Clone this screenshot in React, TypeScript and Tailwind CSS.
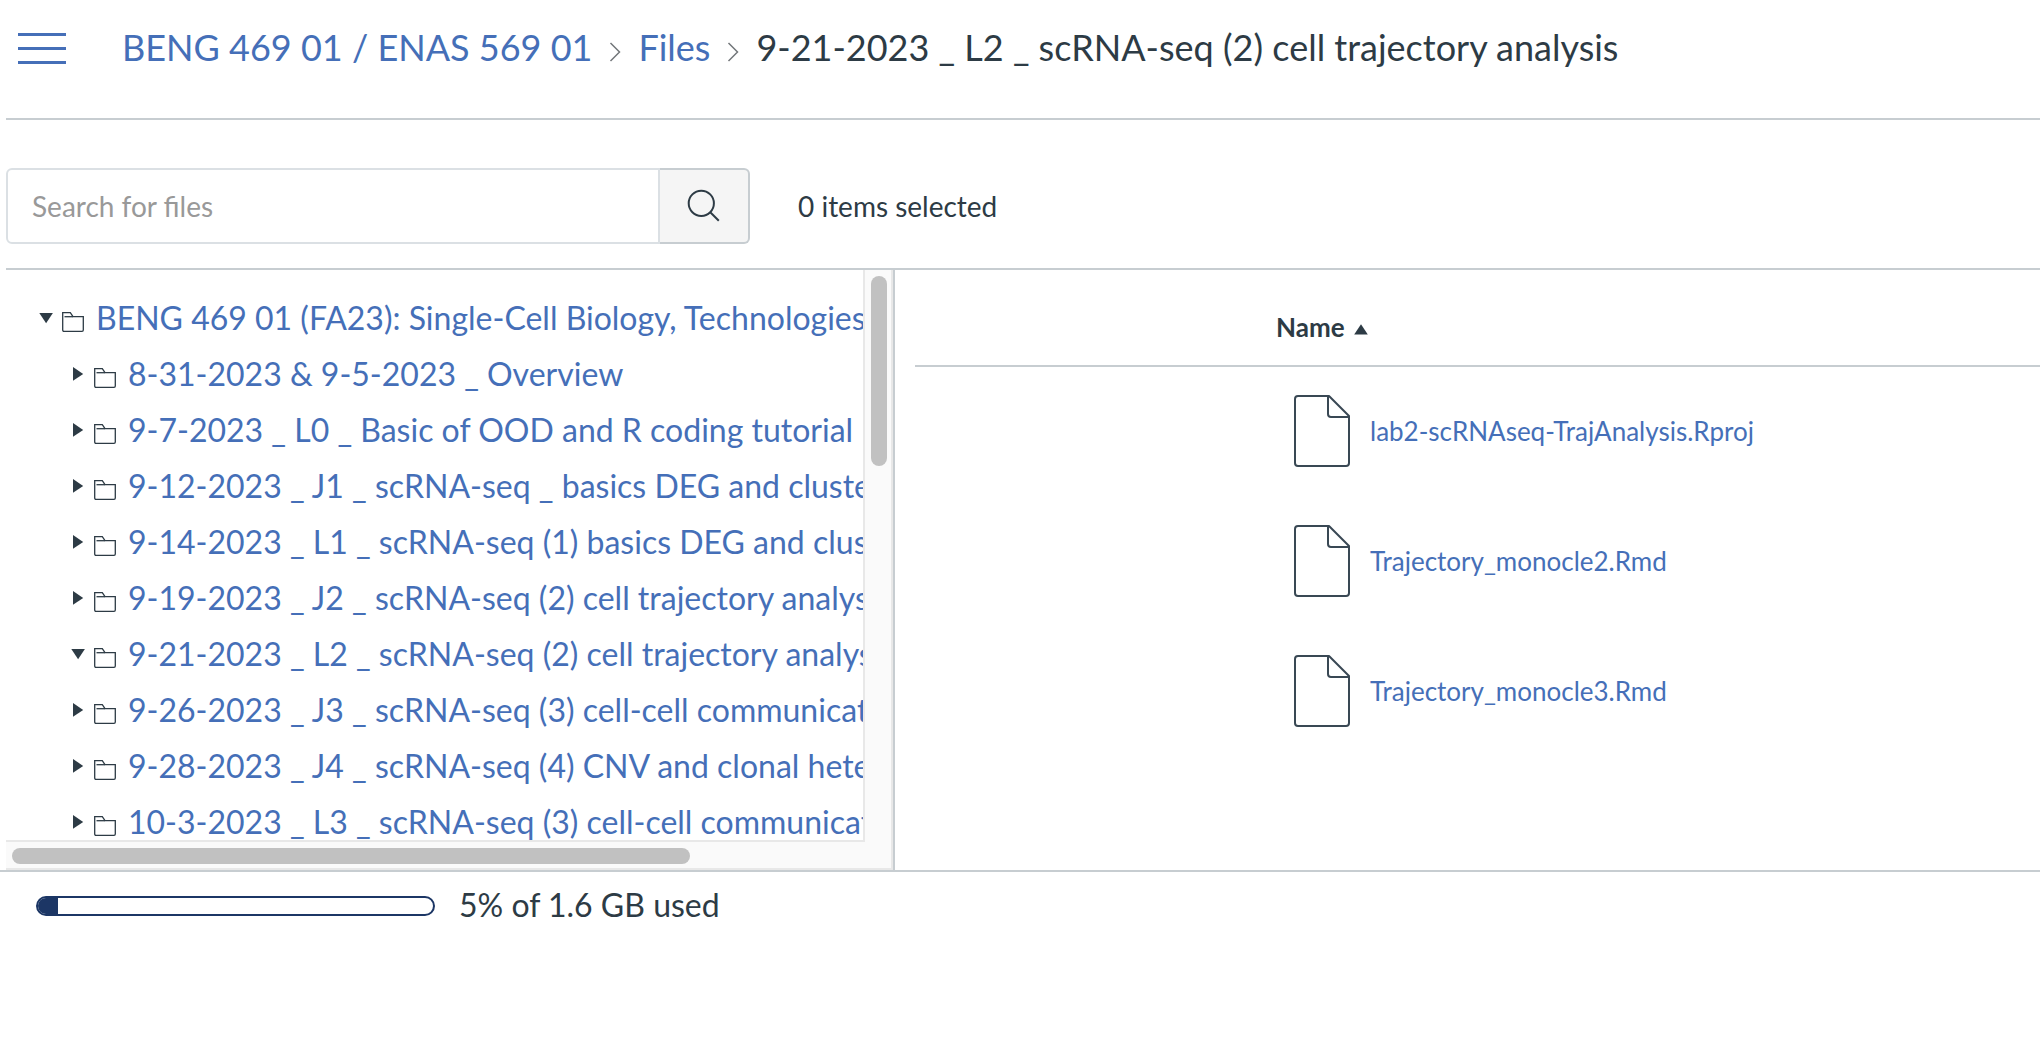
import React from "react";

type Folder = { name: string; open?: boolean };

const folders: Folder[] = [
  { name: "8-31-2023 & 9-5-2023 _ Overview" },
  { name: "9-7-2023 _ L0 _ Basic of OOD and R coding tutorial" },
  { name: "9-12-2023 _ J1 _ scRNA-seq _ basics DEG and clustering" },
  { name: "9-14-2023 _ L1 _ scRNA-seq (1) basics DEG and clustering" },
  { name: "9-19-2023 _ J2 _ scRNA-seq (2) cell trajectory analysis" },
  { name: "9-21-2023 _ L2 _ scRNA-seq (2) cell trajectory analysis", open: true },
  { name: "9-26-2023 _ J3 _ scRNA-seq (3) cell-cell communication" },
  { name: "9-28-2023 _ J4 _ scRNA-seq (4) CNV and clonal heterogeneity" },
  { name: "10-3-2023 _ L3 _ scRNA-seq (3) cell-cell communication" },
];

const files = ["lab2-scRNAseq-TrajAnalysis.Rproj", "Trajectory_monocle2.Rmd", "Trajectory_monocle3.Rmd"];

function Chevron() {
  return (
    <svg className="mt-[10px] h-[20px] w-[12px] shrink-0" viewBox="0 0 12 20" fill="none" stroke="#73777a" strokeWidth="1.5">
      <path d="M1.5 1 L10.5 10 L1.5 19" />
    </svg>
  );
}

function Caret({ open }: { open?: boolean }) {
  return (
    <svg className="h-[14px] w-[14px] shrink-0 overflow-visible" viewBox="0 0 14 14" fill="#2d3b45">
      {open ? <path d="M0.3 2 H13.9 L7.1 12.2 Z" /> : <path d="M2 0 L12.2 6.9 L2 13.8 Z" />}
    </svg>
  );
}

function FolderIcon() {
  return (
    <svg className="h-[22px] w-[24px] shrink-0" viewBox="0 0 24 22" fill="none" stroke="#2d3b45" strokeWidth="1.3">
      <path d="M1.7 1.7 H9.3 L12 5.7 H22.3 V19 Q22.3 20.3 21 20.3 H3 Q1.7 20.3 1.7 19 Z" />
      <path d="M3.5 5.7 H12" />
    </svg>
  );
}

function FileIcon() {
  return (
    <svg className="h-[72px] w-[56px] shrink-0" viewBox="0 0 56 72" fill="none" stroke="#394854" strokeWidth="2" strokeLinejoin="round">
      <path d="M4 1 H35 L55 21 V68 Q55 71 52 71 H4 Q1 71 1 68 V4 Q1 1 4 1 Z" />
      <path d="M34 1 V19 Q34 22 37 22 H55" />
    </svg>
  );
}

export default function App() {
  return (
    <div className="h-[1040px] w-[2040px] overflow-hidden bg-white font-['Lato',sans-serif] text-[#2d3b45]">
      <header className="ml-[6px] flex h-[120px] items-start border-b-2 border-[#c7cdd1] pl-[12px]">
        <button className="mt-[33px] flex w-[48px] flex-col gap-[11px]">
          <span className="h-[3px] w-full bg-[#456fb8]" />
          <span className="h-[3px] w-full bg-[#456fb8]" />
          <span className="h-[3px] w-full bg-[#456fb8]" />
        </button>
        <nav className="ml-[56px] mt-[23px] flex h-[48px] items-center whitespace-nowrap text-[36px] leading-[48px] text-[#456fb8]">
          <a>BENG 469 01 / ENAS 569 01</a>
          <span className="ml-[17px] mr-[17px] flex"><Chevron /></span>
          <a>Files</a>
          <span className="ml-[17px] mr-[17px] flex"><Chevron /></span>
          <span className="text-[#2d3b45]">9-21-2023 _ L2 _ scRNA-seq (2) cell trajectory analysis</span>
        </nav>
      </header>

      <section className="ml-[6px] flex h-[150px] items-start border-b-2 border-[#c7cdd1] pt-[48px]">
        <div className="flex h-[76px] w-[654px] items-center rounded-l-[6px] border-2 border-[#dbe0e4] pl-[24px] text-[28px] text-[#999999]">
          Search for files
        </div>
        <button className="flex h-[76px] w-[90px] items-center justify-center rounded-r-[6px] border-2 border-l-0 border-[#c7cdd1] bg-[#f5f5f5]">
          <svg className="h-[34px] w-[34px]" viewBox="0 0 34 34" fill="none" stroke="#2d3b45" strokeWidth="2">
            <circle cx="14.3" cy="14.3" r="12.6" />
            <path d="M23 23 L31.8 31.8" />
          </svg>
        </button>
        <p className="ml-[48px] text-[28px] leading-[76px]">0 items selected</p>
      </section>

      <main className="flex h-[602px] border-b-2 border-[#c7cdd1]">
        <aside className="ml-[6px] flex w-[889px] flex-col border-r-2 border-[#c7cdd1]">
          <div className="flex h-[570px]">
            <div className="w-[857px] overflow-hidden whitespace-nowrap pt-[20px] text-[32px] leading-[56px] text-[#456fb8]">
              <div className="flex h-[56px] items-center pl-[33px]">
                <Caret open />
                <span className="ml-[8px] mt-[8px] flex"><FolderIcon /></span>
                <a className="ml-[11px]">BENG 469 01 (FA23): Single-Cell Biology, Technologies</a>
              </div>
              {folders.map((f) => (
                <div key={f.name} className="flex h-[56px] items-center pl-[65px]">
                  <Caret open={f.open} />
                  <span className="ml-[8px] mt-[8px] flex"><FolderIcon /></span>
                  <a className="ml-[11px]">{f.name}</a>
                </div>
              ))}
            </div>
            <div className="flex w-[30px] border-x-2 border-[#e8e8e8] bg-[#fafafa] pl-[6px] pt-[6px]">
              <div className="h-[190px] w-[16px] rounded-full bg-[#c1c1c1]" />
            </div>
          </div>
          <div className="flex h-[30px]">
            <div className="h-[30px] w-[859px] border-y-2 border-[#e8e8e8] bg-[#fafafa] pl-[6px] pt-[6px]">
              <div className="h-[16px] w-[678px] rounded-full bg-[#c1c1c1]" />
            </div>
            <div className="w-[28px] border-b-2 border-r-2 border-[#e8e8e8] bg-[#fafafa]" />
          </div>
        </aside>
        <section className="ml-[20px] flex-1">
          <div className="flex h-[97px] items-center border-b-2 border-[#c7cdd1] pl-[361px] pt-[18px]">
            <span className="text-[26px] font-bold leading-[36px]">Name</span>
            <svg className="ml-[9px] mt-[5px] h-[11px] w-[14px]" viewBox="0 0 14 11" fill="#2d3b45">
              <path d="M0.2 10.6 L7 0.2 L13.8 10.6 Z" />
            </svg>
          </div>
          {files.map((name) => (
            <div key={name} className="flex h-[130px] items-center pb-[2px] pl-[379px]">
              <FileIcon />
              <a className="ml-[20px] text-[26px] leading-[36px] text-[#456fb8]">{name}</a>
            </div>
          ))}
        </section>
      </main>

      <footer className="flex h-[68px] items-center pl-[36px]">
        <div className="h-[20px] w-[399px] overflow-hidden rounded-full border-2 border-[#1c3665]">
          <div className="h-full w-[20px] bg-[#1c3665]" />
        </div>
        <span className="-mt-[2px] ml-[24px] text-[32px] leading-[44px]">5% of 1.6 GB used</span>
      </footer>
    </div>
  );
}
